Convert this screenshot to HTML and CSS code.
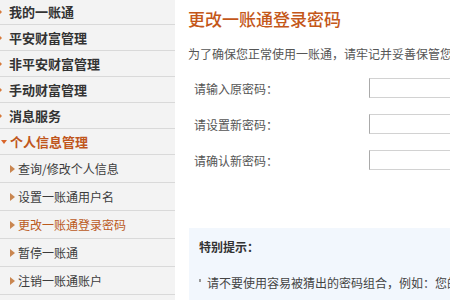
FILE: index.html
```html
<!DOCTYPE html>
<html lang="zh-CN">
  <head>
    <meta charset="utf-8">
    <title>更改一账通登录密码</title>
    <link rel="stylesheet" href="styles.css">
  </head>
  <body>
    <div class="page">
      <ul class="side-nav">
        <li class="nav-top"><a href="#">我的一账通</a></li>
        <li class="nav-top"><a href="#">平安财富管理</a></li>
        <li class="nav-top"><a href="#">非平安财富管理</a></li>
        <li class="nav-top"><a href="#">手动财富管理</a></li>
        <li class="nav-top"><a href="#">消息服务</a></li>
        <li class="nav-top open"><a href="#">个人信息管理</a></li>
        <li class="nav-sub"><a href="#">查询/修改个人信息</a></li>
        <li class="nav-sub"><a href="#">设置一账通用户名</a></li>
        <li class="nav-sub current"><a href="#">更改一账通登录密码</a></li>
        <li class="nav-sub"><a href="#">暂停一账通</a></li>
        <li class="nav-sub"><a href="#">注销一账通账户</a></li>
      </ul>

      <div class="main">
        <h1 class="main-title">更改一账通登录密码</h1>
        <p class="intro">为了确保您正常使用一账通，请牢记并妥善保管您的登录密码。</p>

        <form class="pwd-form">
          <label for="old-pwd">请输入原密码：</label>
          <input type="password" id="old-pwd">
          <label for="new-pwd">请设置新密码：</label>
          <input type="password" id="new-pwd">
          <label for="re-pwd">请确认新密码：</label>
          <input type="password" id="re-pwd">
        </form>

        <div class="tips">
          <h2>特别提示：</h2>
          <ul>
            <li>请不要使用容易被猜出的密码组合，例如：您的生日、电话号码等。</li>
          </ul>
        </div>
      </div>
    </div>
  </body>
</html>
```

FILE: styles.css
```css
html,
body {
  overflow: hidden;
}

body {
  margin: 0;
  padding: 0;
  background: #fff;
  font-family: "Noto Sans CJK SC", "Liberation Sans", sans-serif;
  font-size: 12px;
  color: #555;
}

a {
  text-decoration: none;
}

.page {
  display: flex;
  width: 720px;
}

/* left menu */
.side-nav {
  flex: 0 0 175px;
  margin: -1px 0 0;
  padding: 0;
  list-style: none;
  background: #f3f3f3;
}

.side-nav li {
  border-bottom: 1px solid #d9d9d9;
}

.side-nav a {
  display: flex;
  align-items: center;
}

.nav-top a {
  height: 25px;
  font-size: 13px;
  font-weight: bold;
  color: #333;
}

.nav-top a::before {
  content: "";
  width: 0;
  height: 0;
  margin: 0 7px 0 -2px;
  border-left: 4px solid #d6793a;
  border-top: 4px solid transparent;
  border-bottom: 4px solid transparent;
}

.nav-top.open a {
  color: #c0561c;
}

.nav-top.open a::before {
  margin: 0 3px 0 1px;
  border-top: 4px solid #d9652a;
  border-left: 3px solid transparent;
  border-right: 3px solid transparent;
  border-bottom: 0;
}

.nav-sub a {
  height: 27px;
  font-size: 12px;
  color: #3c3c3c;
}

.nav-sub a::before {
  content: "";
  width: 0;
  height: 0;
  margin: 0 3px 0 10px;
  border-left: 5px solid #c98650;
  border-top: 4px solid transparent;
  border-bottom: 4px solid transparent;
}

.nav-sub.current a {
  color: #bb5a1d;
}

/* content */
.main {
  flex: 1;
  padding: 9px 0 0 13px;
}

.main-title {
  margin: 0;
  font-size: 17px;
  line-height: 20px;
  font-weight: 500;
  color: #c45719;
}

.intro {
  margin: 15px 0 0;
  line-height: 20px;
  white-space: nowrap;
}

.pwd-form {
  display: grid;
  grid-template-columns: 175px 160px;
  grid-auto-rows: 20px;
  row-gap: 16px;
  align-items: center;
  margin-top: 14px;
  padding-left: 6px;
}

.pwd-form label {
  color: #555;
}

.pwd-form input {
  box-sizing: border-box;
  height: 20px;
  margin: 0;
  border: 1px solid #d2d2d2;
  border-left-color: #aaa;
  background: #fff;
}

.tips {
  margin: 58px 0 0 1px;
  padding: 9px 0 20px 10px;
  background: #f2f7fd;
}

.tips h2 {
  margin: 0;
  font-size: 12px;
  line-height: 20px;
  color: #333;
}

.tips ul {
  margin: 16px 0 0;
  padding: 0;
  list-style: none;
}

.tips li {
  display: flex;
  line-height: 20px;
  white-space: nowrap;
  color: #444;
}

.tips li::before {
  content: "";
  flex: none;
  width: 2px;
  height: 3px;
  margin: 6px 6px 0 0;
  background: #999;
}
```
